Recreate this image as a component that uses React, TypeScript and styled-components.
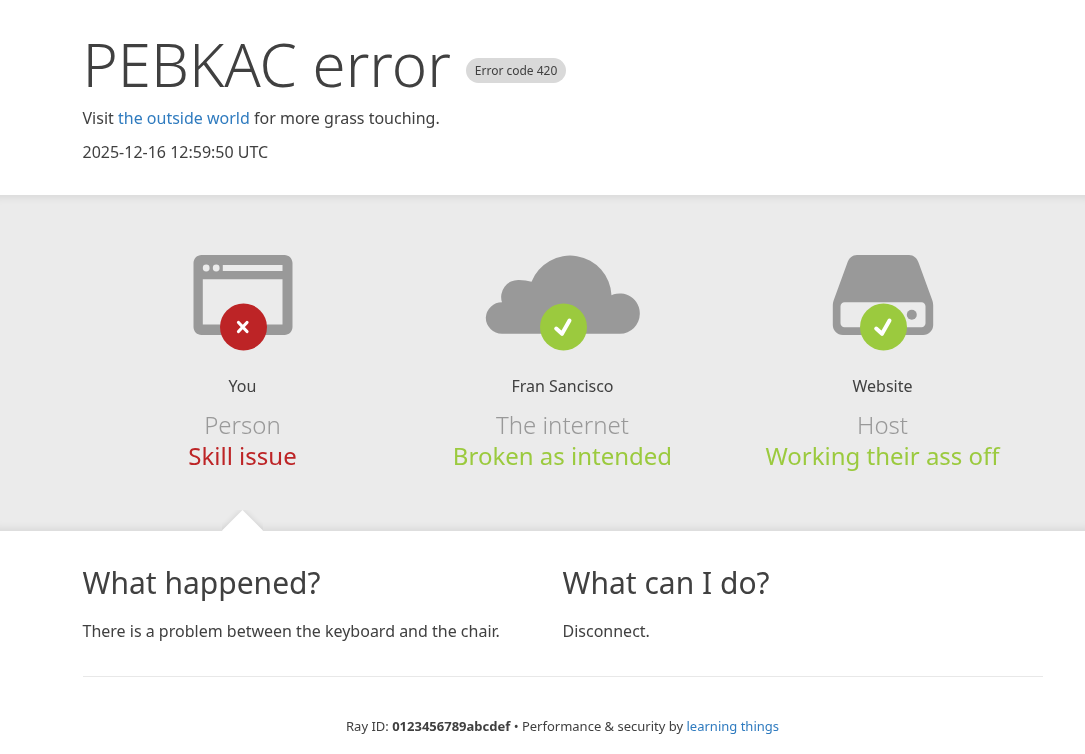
import React from "react";
import styled, { createGlobalStyle } from "styled-components";

const Global = createGlobalStyle`
  html, body { margin: 0; padding: 0; background: #fff; }
  body { font-family: "Noto Sans", "Open Sans", sans-serif; color: #404040; font-size: 16px; line-height: 24px; }
  #root { will-change: transform; }
  * { box-sizing: border-box; }
`;

const Wrapper = styled.div`
  width: 960px;
  margin-left: 82.5px;
`;

const Header = styled.header`
  height: 195px;
  padding-top: 28px;
`;

const TitleRow = styled.div`
  display: flex;
  align-items: center;
  height: 72px;
`;

const Title = styled.h1`
  margin: 0;
  font-size: 60px;
  line-height: 72px;
  font-weight: 300;
  color: #404040;
`;

const Badge = styled.span`
  margin-left: 15.5px;
  margin-top: 13px;
  height: 25px;
  padding: 0 8.5px;
  display: flex;
  align-items: center;
  border-radius: 13px;
  background: #d9d9d9;
  font-size: 12px;
  color: #404040;
`;

const Para = styled.p`
  margin: 0;
  font-size: 16px;
  line-height: 24px;
`;

const Visit = styled(Para)`
  margin-top: 6px;
`;

const Stamp = styled(Para)`
  margin-top: 10px;
`;

const Link = styled.a`
  color: #2f7bbf;
  text-decoration: none;
`;

const Band = styled.section`
  position: relative;
  height: 336px;
  background: #ebebeb;
  box-shadow: inset 0 10px 8px -8px rgba(0, 0, 0, 0.09), inset 0 -10px 8px -8px rgba(0, 0, 0, 0.09);
`;

const Columns = styled.div`
  display: grid;
  grid-template-columns: repeat(3, 320px);
`;

const Column = styled.div`
  display: flex;
  flex-direction: column;
  align-items: center;
  padding-top: 60px;
  text-align: center;
`;

const IconWrap = styled.div`
  position: relative;
  width: 160px;
  height: 96px;
`;

const Glyph = styled.svg`
  display: block;
  width: 160px;
  height: 96px;
`;

const Place = styled.div`
  margin-top: 23px;
  font-size: 16px;
  line-height: 24px;
`;

const Kind = styled.div`
  margin-top: 12px;
  font-size: 24px;
  line-height: 30px;
  font-weight: 300;
  color: #999;
`;

const Status = styled.div<{ $ok: boolean }>`
  font-size: 24px;
  line-height: 32px;
  color: ${(p) => (p.$ok ? "#9bca3e" : "#bd2426")};
`;

const Pointer = styled.div`
  position: absolute;
  left: 222px;
  bottom: 0;
  width: 41px;
  height: 21px;
  overflow: hidden;
  &::after {
    content: "";
    position: absolute;
    left: 6px;
    top: 6px;
    width: 29px;
    height: 29px;
    background: #fff;
    transform: rotate(45deg);
    box-shadow: 0 0 6px rgba(0, 0, 0, 0.12);
  }
`;

const Details = styled.div`
  display: grid;
  grid-template-columns: 480px 480px;
  padding-top: 32px;
  height: 146px;
  border-bottom: 1px solid #e8e8e8;
`;

const Heading = styled.h2`
  margin: 0 0 16px;
  font-size: 30px;
  line-height: 40px;
  font-weight: 400;
  color: #404040;
`;

const Footer = styled.footer`
  padding-top: 39px;
  text-align: center;
  font-size: 13px;
  line-height: 20px;
  color: #404040;
`;

const Strong = styled.strong`
  font-weight: 700;
`;

const BadMark = () => (
  <g>
    <circle cx={80.5} cy={72} r={23.5} fill="#bd2426" />
    <path d="M75.500 67.500L84 76.500M84 67.500L75.500 76.500" stroke="#fff" strokeWidth={3.2} strokeLinecap="round" fill="none" />
  </g>
);

const GoodMark = () => (
  <g>
    <circle cx={80.5} cy={72} r={23.5} fill="#9bca3e" />
    <path d="M73.200 73.500L79 78.800L86.500 65.500" stroke="#fff" strokeWidth={4} strokeLinecap="round" strokeLinejoin="round" fill="none" />
  </g>
);

const BrowserIcon = () => (
  <Glyph viewBox="0 0 160 96">
    <path
      fillRule="evenodd"
      fill="#999"
      d="M38.500 0h83c4.400 0 8 3.600 8 8v64c0 4.400-3.600 8-8 8h-83c-4.400 0-8-3.600-8-8V8c0-4.400 3.600-8 8-8zM39.800 24.300v45.300h79.700V24.300zM59.800 10v6h59.700v-6z"
    />
    <circle cx="43.200" cy="13" r="3.400" fill="#ebebeb" />
    <circle cx="53.200" cy="13" r="3.400" fill="#ebebeb" />
    <BadMark />
  </Glyph>
);

const CloudIcon = () => (
  <Glyph viewBox="0 0 160 96">
    <path
      fill="#999"
      d="M19 78.700A16.200 16.200 0 0 1 2.800 62.500A16.200 16.200 0 0 1 19 47.300A17 17 0 0 1 36 25Q43 25 48.500 26.700A41.500 41.500 0 0 1 128.500 40.200A20 20 0 0 1 156.800 59A20 20 0 0 1 137 78.700Z"
    />
    <GoodMark />
  </Glyph>
);

const DriveIcon = () => (
  <Glyph viewBox="0 0 160 96">
    <path
      fillRule="evenodd"
      fill="#999"
      d="M54 0h52c4.500 0 8.200 3 9.800 8.300l13.400 36.700c.7 2 1 3.500 1 6V70c0 5.500-4.500 10-10 10h-80.400c-5.500 0-10-4.500-10-10V51c0-2.500.3-4 1-6L44.200 8.300C45.800 3 49.500 0 54 0zM41.500 47.300c-2.200 0-4 1.800-4 4v17c0 2.200 1.800 4 4 4h77c2.200 0 4-1.800 4-4v-17c0-2.200-1.800-4-4-4z"
    />
    <circle cx="108.800" cy="59.700" r="5" fill="#999" />
    <GoodMark />
  </Glyph>
);

const Node = ({ icon, place, kind, status, ok }: { icon: React.ReactNode; place: string; kind: string; status: string; ok: boolean }) => (
  <Column>
    <IconWrap>{icon}</IconWrap>
    <Place>{place}</Place>
    <Kind>{kind}</Kind>
    <Status $ok={ok}>{status}</Status>
  </Column>
);

export default function App() {
  return (
    <>
      <Global />
      <Header>
        <Wrapper>
          <TitleRow>
            <Title>PEBKAC error</Title>
            <Badge>Error code 420</Badge>
          </TitleRow>
          <Visit>
            Visit <Link href="#">the outside world</Link> for more grass touching.
          </Visit>
          <Stamp>2025-12-16 12:59:50 UTC</Stamp>
        </Wrapper>
      </Header>
      <Band>
        <Wrapper>
          <Columns>
            <Node icon={<BrowserIcon />} place="You" kind="Person" status="Skill issue" ok={false} />
            <Node icon={<CloudIcon />} place="Fran Sancisco" kind="The internet" status="Broken as intended" ok />
            <Node icon={<DriveIcon />} place="Website" kind="Host" status="Working their ass off" ok />
          </Columns>
        </Wrapper>
        <Pointer />
      </Band>
      <Wrapper>
        <Details>
          <div>
            <Heading>What happened?</Heading>
            <Para>There is a problem between the keyboard and the chair.</Para>
          </div>
          <div>
            <Heading>What can I do?</Heading>
            <Para>Disconnect.</Para>
          </div>
        </Details>
        <Footer>
          Ray ID: <Strong>0123456789abcdef</Strong> • Performance &amp; security by <Link href="#">learning things</Link>
        </Footer>
      </Wrapper>
    </>
  );
}
